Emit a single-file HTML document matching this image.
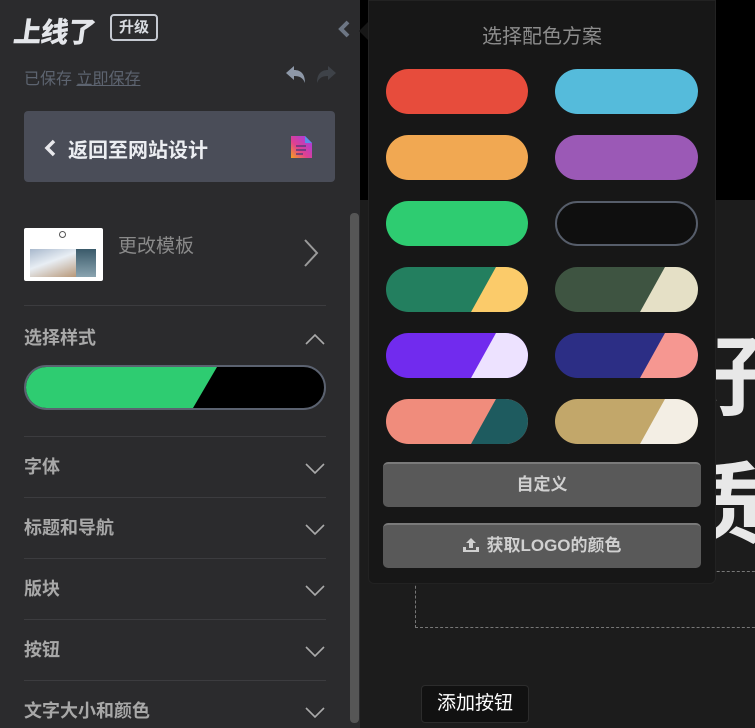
<!DOCTYPE html>
<html><head><meta charset="utf-8"><style>
*{margin:0;padding:0;box-sizing:border-box}
body{width:755px;height:728px;overflow:hidden;background:#1c1c1c;position:relative;font-family:"Liberation Sans","Noto Sans CJK SC",sans-serif}
.abs{position:absolute}
.side{left:0;top:0;width:360px;height:728px;background:#2b2b2d}
.sep{position:absolute;left:24px;width:302px;height:1px;background:#3c3c3f}
.item{position:absolute;left:24px;font-size:18px;font-weight:bold;color:#a8a8a8}
.chev{position:absolute;left:305px;width:20px;height:12px}
.pill{position:absolute;width:142px;height:45px;border-radius:23px;overflow:hidden}
.pill i{position:absolute;inset:0;clip-path:polygon(110px 0,100% 0,100% 100%,85px 100%)}
.btn{position:absolute;left:383px;width:318px;height:45px;background:#595959;border-radius:5px;border-top:2px solid #7a7a7a;color:#d0d0d0;font-weight:bold;font-size:17px;text-align:center;line-height:42px}
</style></head><body>
<div class="abs" style="left:360px;top:0;width:395px;height:200px;background:#000"></div>
<div class="abs" style="left:676px;top:328px;font-size:88px;font-weight:bold;color:#e8e8e8;line-height:100px">好</div>
<div class="abs" style="left:676px;top:456px;font-size:88px;font-weight:bold;color:#e8e8e8;line-height:100px">质</div>
<div class="abs" style="left:415px;top:571px;width:360px;height:57px;border:1px dashed #777"></div>
<div class="abs" style="left:421px;top:685px;width:108px;height:38px;background:#111;border:1px solid #2c2c2c;border-radius:4px;color:#fff;font-size:19px;text-align:center;line-height:36px">添加按钮</div>

<div class="abs side">
 <div class="abs" style="left:14px;top:11px;font-size:28px;font-weight:900;color:#e4e6ea;letter-spacing:-1px;transform:skewX(-8deg)">上线了</div>
 <div class="abs" style="left:110px;top:14px;width:48px;height:27px;border:2px solid #c6cad2;border-radius:4px;color:#d8dbe0;font-size:15px;font-weight:bold;text-align:center;line-height:23px">升级</div>
 <svg class="abs" style="left:336px;top:19px" width="16" height="20" viewBox="0 0 16 20"><path d="M12 3L5 10l7 7" stroke="#6d7684" stroke-width="4" fill="none"/></svg>
 <div class="abs" style="left:24px;top:65px;font-size:16px;color:#5d6470">已保存 <span style="text-decoration:underline">立即保存</span></div>
 <svg class="abs" style="left:284px;top:64px" width="24" height="22" viewBox="0 0 24 22"><path d="M2 9L10 2v4c7 0 11 4 11 13-2-5-5-7-11-7v4z" fill="#8e98a8"/></svg>
 <svg class="abs" style="left:314px;top:64px" width="24" height="22" viewBox="0 0 24 22"><path d="M22 9L14 2v4C7 6 3 10 3 19c2-5 5-7 11-7v4z" fill="#3e4248"/></svg>
 <div class="abs" style="left:24px;top:111px;width:311px;height:71px;background:#4a4d58;border-radius:4px"></div>
 <svg class="abs" style="left:42px;top:138px" width="16" height="20" viewBox="0 0 16 20"><path d="M12 3L5 10l7 7" stroke="#e8e8ec" stroke-width="3.5" fill="none"/></svg>
 <div class="abs" style="left:68px;top:134px;font-size:20px;font-weight:bold;color:#eceef2">返回至网站设计</div>
 <svg class="abs" style="left:290px;top:135px" width="23" height="24" viewBox="0 0 23 24"><defs><linearGradient id="g" x1="1" y1="0" x2="0" y2="1"><stop offset="0" stop-color="#9b3cf0"/><stop offset=".6" stop-color="#e04090"/><stop offset="1" stop-color="#f7a21c"/></linearGradient></defs><path d="M1 1h14l7 7v15H1z" fill="url(#g)"/><path d="M15 1v7h7z" fill="#5b8ee8"/><path d="M6 11h10M6 15h10M6 19h7" stroke="#5a3a7a" stroke-width="1.6"/></svg>
 <div class="abs" style="left:24px;top:228px;width:79px;height:53px;background:#fff;border-radius:2px;overflow:hidden">
  <div class="abs" style="left:35px;top:3px;width:7px;height:7px;border:1px solid #555;border-radius:50%"></div>
  <div class="abs" style="left:6px;top:21px;width:46px;height:28px;background:linear-gradient(160deg,#a8b8cc,#e8eef4 45%,#b89878)"></div>
  <div class="abs" style="left:52px;top:21px;width:20px;height:28px;background:linear-gradient(#3a5a6a,#8aa4b0)"></div>
 </div>
 <div class="abs" style="left:118px;top:231px;font-size:19px;color:#8a8a8a">更改模板</div>
 <svg class="abs" style="left:302px;top:238px" width="18" height="30" viewBox="0 0 18 30"><path d="M3 2l12 13L3 28" stroke="#9a9a9a" stroke-width="2" fill="none"/></svg>
 <div class="sep" style="top:305px"></div>
 <div class="item" style="top:324px">选择样式</div>
 <svg class="chev" style="top:333px" viewBox="0 0 20 12"><path d="M1 11L10 2l9 9" stroke="#aaa" stroke-width="1.6" fill="none"/></svg>
 <div class="abs" style="left:24px;top:365px;width:302px;height:45px;border-radius:23px;border:2px solid #5b6270;overflow:hidden;background:#000">
  <div class="abs" style="inset:0;background:#2ecc71;clip-path:polygon(0 0,191px 0,167px 100%,0 100%)"></div>
 </div>
 <div class="sep" style="top:436px"></div>
 <div class="item" style="top:453px">字体</div>
 <svg class="chev" style="top:463px" viewBox="0 0 20 12"><path d="M1 1l9 9 9-9" stroke="#aaa" stroke-width="1.6" fill="none"/></svg>
 <div class="sep" style="top:497px"></div>
 <div class="item" style="top:514px">标题和导航</div>
 <svg class="chev" style="top:524px" viewBox="0 0 20 12"><path d="M1 1l9 9 9-9" stroke="#aaa" stroke-width="1.6" fill="none"/></svg>
 <div class="sep" style="top:558px"></div>
 <div class="item" style="top:575px">版块</div>
 <svg class="chev" style="top:585px" viewBox="0 0 20 12"><path d="M1 1l9 9 9-9" stroke="#aaa" stroke-width="1.6" fill="none"/></svg>
 <div class="sep" style="top:619px"></div>
 <div class="item" style="top:636px">按钮</div>
 <svg class="chev" style="top:646px" viewBox="0 0 20 12"><path d="M1 1l9 9 9-9" stroke="#aaa" stroke-width="1.6" fill="none"/></svg>
 <div class="sep" style="top:680px"></div>
 <div class="item" style="top:697px">文字大小和颜色</div>
 <svg class="chev" style="top:707px" viewBox="0 0 20 12"><path d="M1 1l9 9 9-9" stroke="#aaa" stroke-width="1.6" fill="none"/></svg>
 <div class="abs" style="left:350px;top:213px;width:9px;height:510px;background:#565656;border-radius:4px"></div>
</div>

<svg class="abs" style="left:356px;top:20px" width="14" height="22" viewBox="0 0 14 22"><path d="M14 0L3 11l11 11z" fill="#171717"/></svg>
<div class="abs" style="left:368px;top:0;width:348px;height:584px;background:#171717;border-radius:0 0 6px 6px;border:1px solid #222"></div>
<div class="abs" style="left:368px;top:20px;width:348px;text-align:center;font-size:20px;color:#8c8c8c">选择配色方案</div>
<div class="pill" style="left:386px;top:69px;background:#e74c3c"></div>
<div class="pill" style="left:555px;top:69px;width:143px;background:#55bbdb"></div>
<div class="pill" style="left:386px;top:135px;background:#f1a852"></div>
<div class="pill" style="left:555px;top:135px;width:143px;background:#9b59b6"></div>
<div class="pill" style="left:386px;top:201px;background:#2ecc71"></div>
<div class="pill" style="left:555px;top:201px;width:143px;background:#0f0f0f;border:2px solid #565d6a"></div>
<div class="pill" style="left:386px;top:267px;background:#237f5f"><i style="background:#fbcb6a"></i></div>
<div class="pill" style="left:555px;top:267px;width:143px;background:#3e5441"><i style="background:#e5e0c6"></i></div>
<div class="pill" style="left:386px;top:333px;background:#712bee"><i style="background:#ede2ff"></i></div>
<div class="pill" style="left:555px;top:333px;width:143px;background:#2c2e85"><i style="background:#f69791"></i></div>
<div class="pill" style="left:386px;top:399px;background:#f08c7c"><i style="background:#1e5b5f"></i></div>
<div class="pill" style="left:555px;top:399px;width:143px;background:#c2a76a"><i style="background:#f3eee4"></i></div>
<div class="btn" style="top:462px">自定义</div>
<div class="btn" style="top:523px"><svg width="18" height="16" viewBox="0 0 18 16" style="vertical-align:-2px;margin-right:6px"><path d="M9 1l5 5h-3v5H7V6H4z M1 10h3v3h10v-3h3v5H1z" fill="#d0d0d0"/></svg>获取LOGO的颜色</div>
</body></html>
